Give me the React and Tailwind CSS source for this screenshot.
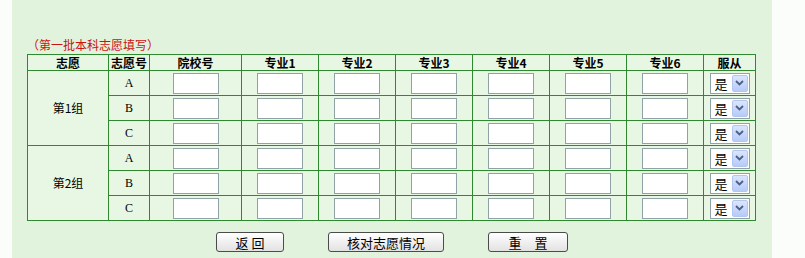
import React from "react";

const cjk = { fontFamily: '"Noto Sans CJK SC", "Liberation Sans", sans-serif' };

function TextInput() {
  return (
    <div className="w-[46px] h-[21px] bg-white border border-[#8fa3a6]" />
  );
}

function Select() {
  return (
    <div className="w-[40px] h-[21px] bg-white border border-[#8fa3a6] flex items-center justify-between pl-[4px] pr-[1px]">
      <span className="text-[13px] leading-none text-black" style={cjk}>是</span>
      <div className="w-[16px] h-[17px] rounded-[2px] border border-[#b4c6ef] bg-gradient-to-b from-[#dbe6fd] to-[#b6cbf7] flex items-center justify-center">
        <svg width="9" height="6" viewBox="0 0 9 6">
          <path d="M1 1 L4.5 4.5 L8 1" fill="none" stroke="#4c5f8c" strokeWidth="1.8" />
        </svg>
      </div>
    </div>
  );
}

function Cell({ children, className = "" }) {
  return (
    <div className={"bg-[#e8f7e3] flex items-center justify-center " + className}>{children}</div>
  );
}

function Head({ children }) {
  return (
    <div className="bg-[#e8f7e3] flex items-center justify-center text-[12px] font-bold leading-none text-black" style={cjk}>
      {children}
    </div>
  );
}

function Btn({ children, w }) {
  return (
    <button
      className={"h-[20px] rounded-[3px] border border-[#4b4b4b] bg-gradient-to-b from-white to-[#e2e2e2] flex items-center justify-center text-[13px] leading-none text-black whitespace-pre " + w}
      style={cjk}
    >
      {children}
    </button>
  );
}

export default function App() {
  const majors = ["专业1", "专业2", "专业3", "专业4", "专业5", "专业6"];
  const groups = ["第1组", "第2组"];
  const letters = ["A", "B", "C"];
  return (
    <div className="w-[805px] h-[258px] bg-[#fbfdfa] flex overflow-hidden">
      <div className="ml-[12px] w-[760px] h-[258px] bg-[#e2f3dd] pl-[15px] pt-[38px]">
        <div className="text-[12px] leading-[14px] h-[16px] text-[#cc1111]" style={cjk}>
          （第一批本科志愿填写）
        </div>
        <div className="w-[729px] grid grid-cols-[80px_40px_91px_76px_76px_76px_76px_76px_76px_51px] grid-rows-[15px_24px_24px_24px_24px_24px_24px] gap-px p-px bg-[#2f8a2f]">
          <Head>志愿</Head>
          <Head>志愿号</Head>
          <Head>院校号</Head>
          {majors.map((m) => (
            <Head key={m}>{m}</Head>
          ))}
          <Head>服从</Head>
          {groups.map((g, gi) =>
            letters.map((l, li) => (
              <React.Fragment key={g + l}>
                {li === 0 && (
                  <div
                    className={
                      "row-span-3 col-start-1 bg-[#e8f7e3] flex items-center justify-center text-[12px] text-black " +
                      (gi === 0 ? "row-start-2" : "row-start-5")
                    }
                    style={cjk}
                  >
                    {g}
                  </div>
                )}
                <Cell className="col-start-2">
                  <span className="text-[12px] leading-none text-black" style={{ fontFamily: '"Liberation Serif", serif' }}>
                    {l}
                  </span>
                </Cell>
                <Cell><TextInput /></Cell>
                {majors.map((m) => (
                  <Cell key={m}><TextInput /></Cell>
                ))}
                <Cell><Select /></Cell>
              </React.Fragment>
            ))
          )}
        </div>
        <div className="w-[729px] mt-[11px] flex justify-center gap-[44px] pl-[1px]">
          <Btn w="w-[68px]">返 回</Btn>
          <Btn w="w-[116px]">核对志愿情况</Btn>
          <Btn w="w-[80px]">重　置</Btn>
        </div>
      </div>
    </div>
  );
}
